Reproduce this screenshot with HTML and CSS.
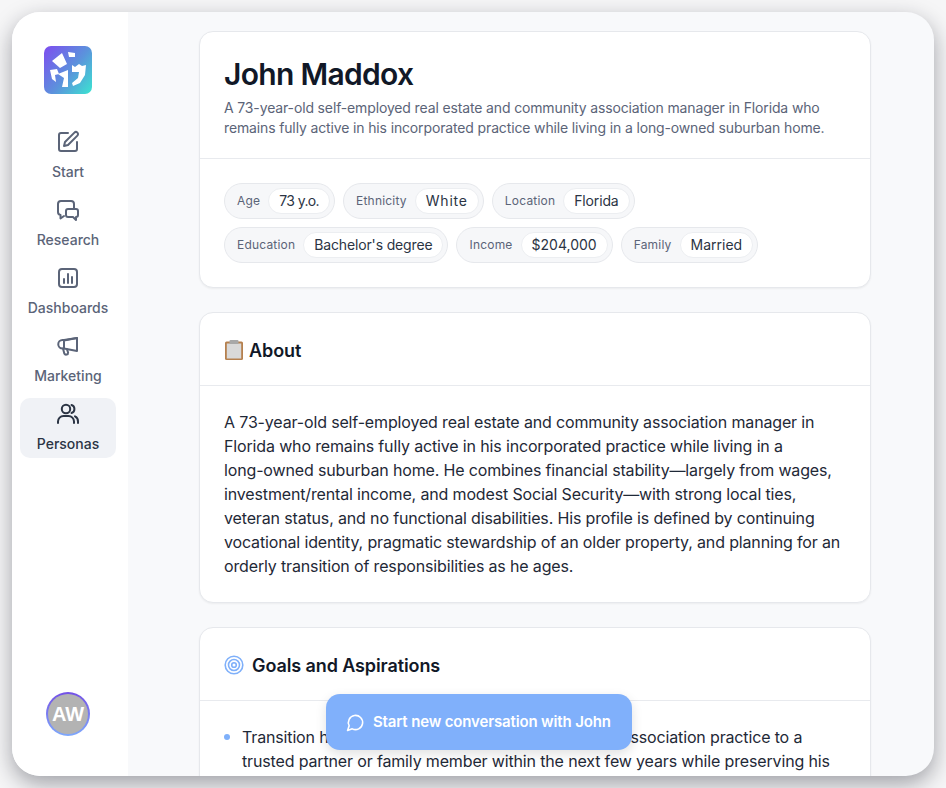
FILE: index.html
```html
<!DOCTYPE html>
<html lang="en">
<head>
<meta charset="utf-8">
<title>John Maddox</title>
<link rel="stylesheet" href="styles.css">
</head>
<body>
<div class="window">
  <aside class="sidebar">
    <div class="logo">
      <svg viewBox="0 0 48 48" width="48" height="48">
        <defs><linearGradient id="lg" x1="0" y1="0.1" x2="1" y2="0.9"><stop offset="0" stop-color="#7b52ee"/><stop offset="0.55" stop-color="#5b93dc"/><stop offset="1" stop-color="#3eddd2"/></linearGradient></defs>
        <rect width="48" height="48" rx="7" fill="url(#lg)"/>
        <path d="M8 15 18 7 23 18 16 22Z M24 6 31 7 31 11 25 11Z M28 19 31 21 35 18 38 20 42 19 41 29 36 37 29 40 28 37 34 32 35 26 28 26Z M6 24 13 23 15 28 11 29 12 36 8 33Z M14 28 19 26 24 24 24 41 18 41 20 32Z" fill="#fff"/>
      </svg>
    </div>
    <nav class="nav">
      <a class="nav-item"><svg class="nav-icon" viewBox="0 0 24 24"><path d="M12 3H5a2 2 0 0 0-2 2v14a2 2 0 0 0 2 2h14a2 2 0 0 0 2-2v-7"/><path d="M18.4 2.6a2.1 2.1 0 1 1 3 3L12 15l-4 1 1-4Z"/></svg><span>Start</span></a>
      <a class="nav-item"><svg class="nav-icon" viewBox="0 0 24 24"><path d="M8 18l-3.500 2.500V17A3 3 0 0 1 2 14V6a3 3 0 0 1 3-3h10a3 3 0 0 1 3 3v4"/><path d="M12 11h8a2 2 0 0 1 2 2v4a2 2 0 0 1-2 2v3l-3-3h-5a2 2 0 0 1-2-2v-4a2 2 0 0 1 2-2Z"/></svg><span>Research</span></a>
      <a class="nav-item"><svg class="nav-icon" viewBox="0 0 24 24"><rect x="3" y="3" width="18" height="18" rx="3"/><path d="M8 17v-4M12 17V8M16 17v-6"/></svg><span>Dashboards</span></a>
      <a class="nav-item"><svg class="nav-icon" viewBox="0 0 24 24"><path d="M21 4v13L8 14.500H6.500a3.500 3.500 0 0 1 0-8.500H8Z"/><path d="M8 6.500 21 4M8 6v8.500"/><path d="M7 14.500l1.300 5a2 2 0 0 0 3.800-1L11 15.300"/></svg><span>Marketing</span></a>
      <a class="nav-item active"><svg class="nav-icon" viewBox="0 0 24 24"><circle cx="10" cy="7" r="4.200"/><path d="M2 21v-1.500A5.500 5.500 0 0 1 7.500 14h5a5.500 5.500 0 0 1 5.500 5.500V21"/><path d="M15.500 3a4.200 4.200 0 0 1 0 8"/><path d="M19 14.300A5.500 5.500 0 0 1 22 19.500V21"/></svg><span>Personas</span></a>
    </nav>
    <div class="avatar"><span>AW</span></div>
  </aside>
  <main class="main">
    <div class="column">
      <section class="card">
        <header class="profile-head">
          <h1>John Maddox</h1>
          <p>A 73-year-old self-employed real estate and community association manager in Florida who remains fully active in his incorporated practice while living in a long-owned suburban home.</p>
        </header>
        <div class="tags">
          <div class="tag"><span class="tag-label">Age</span><span class="tag-value narrow">73 y.o.</span></div>
          <div class="tag"><span class="tag-label">Ethnicity</span><span class="tag-value wide">White</span></div>
          <div class="tag"><span class="tag-label">Location</span><span class="tag-value">Florida</span></div>
          <div class="tag"><span class="tag-label">Education</span><span class="tag-value">Bachelor's degree</span></div>
          <div class="tag"><span class="tag-label">Income</span><span class="tag-value mid">$204,000</span></div>
          <div class="tag"><span class="tag-label">Family</span><span class="tag-value mid">Married</span></div>
        </div>
      </section>
      <section class="card">
        <h2 class="card-title">
          <svg class="title-icon" viewBox="0 0 20 20"><rect x="1" y="1.500" width="18" height="18.500" rx="1.500" fill="#b5804e"/><rect x="2.800" y="3.500" width="14.400" height="15" fill="#d9d9d9"/><rect x="5.500" y="0" width="9" height="4" rx="1" fill="#a8a8a8"/></svg>
          <span>About</span>
        </h2>
        <div class="card-body">A 73-year-old self-employed real estate and community association manager in Florida who remains fully active in his incorporated practice while living in a <span class="nowrap">long-owned</span> suburban home. He combines financial stability—largely from wages, investment/rental income, and modest Social Security—with strong local ties, veteran status, and no functional disabilities. His profile is defined by continuing vocational identity, pragmatic stewardship of an older property, and planning for an orderly transition of responsibilities as he ages.</div>
      </section>
      <section class="card">
        <h2 class="card-title goals">
          <svg class="target-icon" viewBox="0 0 20 20"><circle cx="10" cy="10" r="8.800"/><circle cx="10" cy="10" r="5.500"/><circle cx="10" cy="10" r="2.300"/></svg>
          <span>Goals and Aspirations</span>
        </h2>
        <ul class="goal-list">
          <li>Transition his incorporated real estate and housing association practice to a trusted partner or family member within the next few years while preserving his</li>
        </ul>
      </section>
    </div>
  </main>
  <button class="cta" type="button">
    <svg class="cta-icon" viewBox="0 0 24 24"><path d="M7.900 20A9 9 0 1 0 4 16.100L2 22Z"/></svg>
    <span>Start new conversation with John</span>
  </button>
</div>
</body>
</html>
```
FILE: styles.css
```css
* { box-sizing: border-box; margin: 0; padding: 0; }
html, body { height: 100%; }
body {
  background: #f6f6f7;
  padding: 12px;
  overflow: hidden;
  font-family: Inter, "Liberation Sans", sans-serif;
  color: #111827;
}
.window {
  position: relative;
  display: flex;
  width: 922px;
  height: 764px;
  border-radius: 28px;
  overflow: hidden;
  background: #f8f9fb;
  box-shadow: 0 8px 22px rgba(20, 24, 36, 0.38);
}
.sidebar {
  width: 116px;
  flex: none;
  background: #fff;
  display: flex;
  flex-direction: column;
  align-items: center;
  padding: 34px 12px 40px 8px;
}
.logo { width: 48px; height: 48px; margin-bottom: 32px; }
.logo svg { display: block; }
.nav { display: flex; flex-direction: column; gap: 8px; width: 100%; }
.nav-item {
  height: 60px;
  padding-top: 4px;
  border-radius: 10px;
  display: flex;
  flex-direction: column;
  align-items: center;
  gap: 8px;
  font-size: 14px;
  font-weight: 500;
  line-height: 20px;
  color: #5b6478;
}
.nav-icon {
  width: 24px;
  height: 24px;
  fill: none;
  stroke: currentColor;
  stroke-width: 2;
  stroke-linecap: round;
  stroke-linejoin: round;
  flex: none;
}
.nav-item.active { background: #f0f2f6; color: #2b3444; }
.avatar {
  margin-top: auto;
  width: 44px;
  height: 44px;
  border-radius: 50%;
  padding: 2px;
  background: linear-gradient(180deg, #7350e6, #7fa9fb);
}
.avatar span {
  display: flex;
  align-items: center;
  justify-content: center;
  width: 100%;
  height: 100%;
  border-radius: 50%;
  background: #b3b3b3;
  color: #fff;
  font: 700 20px/1 "Liberation Sans", sans-serif;
}
.main { flex: 1; min-width: 0; padding-top: 19px; overflow: hidden; }
.column {
  width: 672px;
  margin-left: 71px;
  display: flex;
  flex-direction: column;
  gap: 24px;
}
.card {
  background: #fff;
  border: 1px solid #e6e8ec;
  border-radius: 14px;
  box-shadow: 0 1px 2px rgba(0, 0, 0, 0.05);
}
.profile-head { padding: 23px 24px 20px; border-bottom: 1px solid #e8eaee; }
.profile-head h1 { font-size: 30px; line-height: 38px; font-weight: 600; letter-spacing: -0.7px; color: #111827; }
.profile-head p { margin-top: 5px; font-size: 14px; line-height: 20px; letter-spacing: -0.14px; color: #5b6478; }
.tags { display: flex; flex-wrap: wrap; gap: 8px; padding: 24px 24px 24px; }
.tag {
  display: flex;
  align-items: center;
  gap: 8px;
  height: 36px;
  padding: 0 4px 0 12px;
  border: 1px solid #e6e8ec;
  border-radius: 18px;
  background: #f6f7f9;
}
.tag-label { font-size: 12px; letter-spacing: 0.2px; line-height: 16px; color: #5b6478; }
.tag-value {
  height: 26px;
  padding: 0 10px;
  border: 1px solid #eceef1;
  border-radius: 13px;
  background: #fff;
  font-size: 14px;
  line-height: 24px;
  letter-spacing: -0.15px;
  color: #2b3444;
}
.tag-value.narrow { letter-spacing: -0.6px; }
.tag-value.wide { letter-spacing: 0.8px; }
.tag-value.mid { letter-spacing: 0; }
.card-title {
  display: flex;
  align-items: center;
  gap: 5px;
  height: 73px;
  padding: 2px 24px 0;
  border-bottom: 1px solid #e8eaee;
  font-size: 18px;
  font-weight: 600;
  letter-spacing: -0.1px;
  color: #111827;
}
.card-title.goals { gap: 8px; }
.title-icon { width: 20px; height: 20px; flex: none; }
.target-icon { width: 20px; height: 20px; flex: none; fill: none; stroke: #7fb0fa; stroke-width: 1.600; }
.card-body { padding: 24px; font-size: 16px; line-height: 24px; letter-spacing: -0.15px; color: #1f2937; }
.nowrap { white-space: nowrap; }
.goal-list { list-style: none; padding: 24px 24px 24px 42px; font-size: 16px; line-height: 24px; letter-spacing: -0.15px; color: #1f2937; }
.goal-list li { position: relative; }
.goal-list li::before {
  content: "";
  position: absolute;
  left: -18px;
  top: 9px;
  width: 6px;
  height: 6px;
  border-radius: 50%;
  background: #7fb0fa;
}
.cta {
  position: absolute;
  left: 314px;
  top: 682px;
  display: flex;
  align-items: center;
  gap: 8px;
  width: 306px;
  height: 56px;
  padding: 0 20px;
  border: 0;
  border-radius: 14px;
  background: #80b0fb;
  color: #fff;
  font: 600 15px/20px Inter, "Liberation Sans", sans-serif;
  letter-spacing: -0.15px;
  box-shadow: 0 4px 12px rgba(0, 0, 0, 0.12);
}
.cta-icon { width: 19px; height: 19px; fill: none; stroke: #fff; stroke-width: 2; stroke-linejoin: round; flex: none; }
```
